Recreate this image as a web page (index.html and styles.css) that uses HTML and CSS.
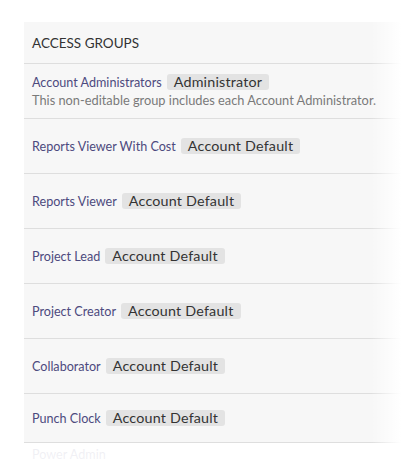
FILE: index.html
```html
<!DOCTYPE html>
<html>
<head>
<meta charset="utf-8">
<link rel="stylesheet" href="styles.css">
</head>
<body>
<div class="page">
  <section class="panel">
    <div class="panel-header">ACCESS GROUPS</div>
    <div class="row row-first">
      <div class="row-main"><a class="group-link">Account Administrators</a><span class="badge">Administrator</span></div>
      <div class="desc">This non-editable group includes each Account Administrator.</div>
    </div>
    <div class="row"><div class="row-main"><a class="group-link">Reports Viewer With Cost</a><span class="badge">Account Default</span></div></div>
    <div class="row"><div class="row-main"><a class="group-link">Reports Viewer</a><span class="badge">Account Default</span></div></div>
    <div class="row"><div class="row-main"><a class="group-link">Project Lead</a><span class="badge">Account Default</span></div></div>
    <div class="row"><div class="row-main"><a class="group-link">Project Creator</a><span class="badge">Account Default</span></div></div>
    <div class="row"><div class="row-main"><a class="group-link">Collaborator</a><span class="badge">Account Default</span></div></div>
    <div class="row row-short"><div class="row-main"><a class="group-link">Punch Clock</a><span class="badge">Account Default</span></div></div>
    <div class="row row-faded"><div class="row-main"><a class="group-link">Power Admin</a></div></div>
    <div class="fade-right"></div>
  </section>
  <div class="fade-bottom"></div>
</div>
</body>
</html>
```
FILE: styles.css
```css
html, body {
  margin: 0;
  padding: 0;
  background: #ffffff;
  font-family: Lato, "Open Sans", sans-serif;
  overflow: hidden;
}
.page {
  position: relative;
  width: 401px;
  height: 463px;
  overflow: hidden;
  padding-top: 22px;
  box-sizing: border-box;
}
.panel {
  position: relative;
  margin-left: 24px;
  width: 377px;
  background: #f7f7f7;
}
.panel-header {
  height: 41px;
  display: flex;
  align-items: center;
  padding-left: 8px;
  font-size: 13.5px;
  color: #333333;
  border-bottom: 1px solid #dedede;
}
.row {
  height: 54px;
  display: flex;
  flex-direction: column;
  justify-content: center;
  padding-left: 8px;
  border-bottom: 1px solid #dedede;
}
.row-short {
  height: 48px;
}
.row-first {
  justify-content: flex-start;
  padding-top: 10px;
  height: 44px;
}
.row-main {
  display: flex;
  align-items: center;
}
.group-link {
  font-size: 12.6px;
  color: #4d4a7e;
  text-decoration: none;
}
.badge {
  margin-left: 5px;
  background: #e3e3e3;
  color: #333333;
  font-size: 14.3px;
  line-height: 16px;
  padding: 0 7px;
  border-radius: 3px;
  letter-spacing: 0.2px;
}
.desc {
  font-size: 12.8px;
  color: #7a7a7a;
  margin-top: 2px;
}
.row-faded {
  border-bottom: none;
  background: #ffffff;
  justify-content: flex-start;
  padding-top: 4px;
}
.fade-right {
  position: absolute;
  top: 0;
  bottom: 0;
  right: 0;
  width: 30px;
  background: linear-gradient(to right, rgba(255,255,255,0), #ffffff);
}
.fade-bottom {
  position: absolute;
  left: 0;
  right: 0;
  top: 443px;
  height: 20px;
  background: linear-gradient(to bottom, rgba(255,255,255,0.9), rgba(255,255,255,0.93));
}
```
